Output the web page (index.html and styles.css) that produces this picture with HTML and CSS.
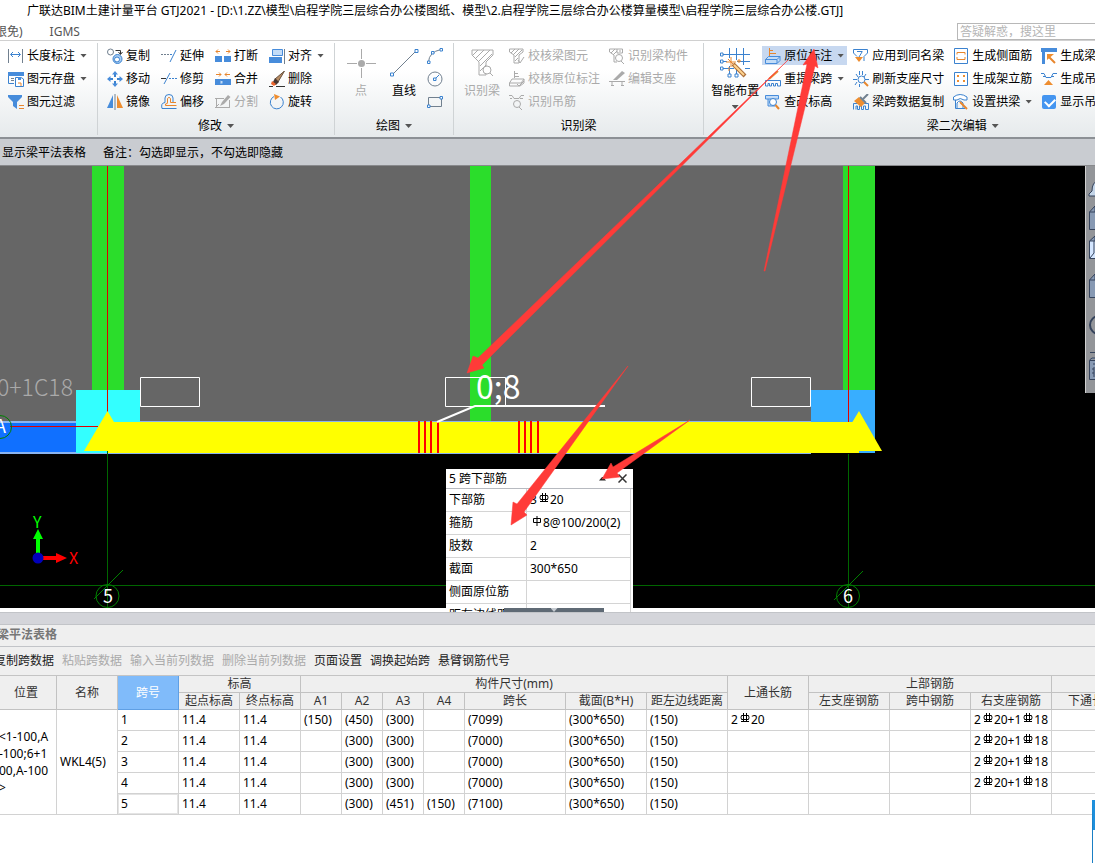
FILE: index.html
```html
<!DOCTYPE html>
<html lang="zh-CN">
<head>
<meta charset="utf-8">
<title>广联达BIM土建计量平台 GTJ2021</title>
<link rel="stylesheet" href="styles.css">
</head>
<body>
<svg class="defs" aria-hidden="true">
  <symbol id="rebar3" viewBox="0 0 10 10"><path d="M1.500 2.500H8.500Q9.500 4.500 8.500 6.500H1.500Q.5 4.500 1.500 2.500ZM3.500 0V9M6.500 0V9M1 8.500H9" fill="none" stroke="#000"/></symbol>
  <symbol id="rebar1" viewBox="0 0 10 10"><path d="M1.500 2.500H8.500V6.500H1.500ZM5 0V10" fill="none" stroke="#000"/></symbol>
  <symbol id="funnel" viewBox="0 0 24 28"><path d="M1 1H22V6L15 13V26H8V13L1 6Z M2 6L7 1M5 9L13 1M8 12L19 1M9 17L21 5M9 22L15 16" /></symbol>
</svg>

<header class="titlebar">广联达BIM土建计量平台 GTJ2021 - [D:\1.ZZ\模型\启程学院三层综合办公楼图纸、模型\2.启程学院三层综合办公楼算量模型\启程学院三层综合办公楼.GTJ]</header>

<nav class="tabs">
  <button class="tab">限免)</button>
  <button class="tab">IGMS</button>
  <input class="search" type="text" aria-label="搜索" placeholder="答疑解惑，搜这里">
</nav>

<section class="ribbon">
  <div class="group">
    <div class="group-body first">
      <div class="tools c1">
        <button class="tool"><svg class="ic" viewBox="0 0 16 16"><path class="g" d="M.5 1V15M14.500 1V15"/><path class="b" d="M3 6.500H12M5 4L2.500 6.500L5 9M10 4L12.500 6.500L10 9"/></svg><span>长度标注</span><i class="caret"></i></button>
        <button class="tool"><svg class="ic" viewBox="0 0 16 16"><path class="b" d="M.5 1V12.500H6M15.500 5V1"/><path class="bf" d="M0 1H16V5H0Z"/><path class="g" d="M3 7.500H6M3 9.500H6"/><path class="b w" d="M7.500 6.500H13L15.500 8V15.500H7.500Z"/><path class="bf" d="M10 6H13V9H10Z"/><path class="o" d="M10 12H13V15"/></svg><span>图元存盘</span><i class="caret"></i></button>
        <button class="tool"><svg class="ic" viewBox="0 0 16 16"><path class="bf" d="M0 1H14V3L9 8V15L5 12V8L0 3Z"/><path class="o" d="M11 11.500H16M11 14.500H16"/></svg><span>图元过滤</span></button>
      </div>
    </div>
  </div>

  <div class="group">
    <div class="group-body second">
      <div class="tools c4">
        <button class="tool"><svg class="ic" viewBox="0 0 16 16"><circle class="g" cx="3.500" cy="4" r="3"/><path class="k" d="M8.500 2.500H13.500V6M11.500 4L13.500 6.500L15.500 4"/><circle class="b lb" cx="10.500" cy="11" r="4.500"/><circle class="b w" cx="10" cy="11.500" r="2.500"/></svg><span>复制</span></button>
        <button class="tool"><svg class="ic" viewBox="0 0 16 16"><path class="g dash" d="M0 6.500H9"/><path class="b" d="M9 6.500H11M9 14L15 2"/></svg><span>延伸</span></button>
        <button class="tool"><svg class="ic" viewBox="0 0 16 16"><path class="bf" d="M0 8H7V14H0ZM9 8H16V14H9Z"/><path class="o" d="M1 3.500H5M11 3.500H15M3 1.500L1 3.500L3 5.500M13 1.500L15 3.500L13 5.500"/></svg><span>打断</span></button>
        <button class="tool"><svg class="ic" viewBox="0 0 16 16"><path class="bl" d="M3.500 1.500H13.500V7.500H3.500Z"/><path class="bf" d="M0 9H13V15H0Z"/><path class="g" d="M15.500 1V16"/></svg><span>对齐</span><i class="caret"></i></button>

        <button class="tool"><svg class="ic" viewBox="0 0 16 16"><path class="b2" d="M8 6V2M8 10V14M6 8H2M10 8H14"/><path class="bf" d="M8 0L11 3.500H5ZM8 16L5 12.500H11ZM0 8L3.500 5V11ZM16 8L12.500 11V5Z"/></svg><span>移动</span></button>
        <button class="tool"><svg class="ic" viewBox="0 0 16 16"><path class="k" d="M0 7.500H5"/><path class="b" d="M3 13L9 2"/><path class="b dash" d="M8 7.500H16"/></svg><span>修剪</span></button>
        <button class="tool"><svg class="ic" viewBox="0 0 16 16"><path class="bf" d="M0 8H16V14H0Z"/><path class="bl" d="M5.500 9.500H8V13H5.500"/><path class="o" d="M1 3.500H6M10 3.500H15M4 1.500L6 3.500L4 5.500M12 1.500L10 3.500L12 5.500"/></svg><span>合并</span></button>
        <button class="tool"><svg class="ic" viewBox="0 0 16 16"><path class="k" d="M0 15.500H4M7 15.500H16"/><path d="M15.500 0L6 8L9 11Z" fill="#b78b62" stroke="#67513e"/><path d="M6 7L10 11L7 14L3 13Z" fill="#493832"/><path d="M3 10L7 13L5 15L2 13Z" fill="#ed642c"/></svg><span>删除</span></button>

        <button class="tool"><svg class="ic" viewBox="0 0 16 16"><path class="bf" d="M6 1V14H0Z"/><path class="g" d="M8 0V16"/><path class="of" d="M10 1V14H16Z"/></svg><span>镜像</span></button>
        <button class="tool"><svg class="ic" viewBox="0 0 16 16"><path class="b" d="M15.500 14.500H1Q-.5 9 4 8.500V4Q4 .5 8 .5T12 4V8.500"/><path class="o" d="M15.500 11.500H4.500V10Q7 10 6.500 8V4.500Q8 2 9.500 4.500V8.500H15"/></svg><span>偏移</span></button>
        <button class="tool off"><svg class="ic" viewBox="0 0 16 16"><path class="s" d="M0 4.500H9M1.500 5V13M1 13.500H15M14.500 6V14M0 14L4 10"/><path d="M13 1L15.500 3L9 10L5 12L7 8Z" fill="#aaa"/></svg><span>分割</span></button>
        <button class="tool"><svg class="ic" viewBox="0 0 16 16"><path class="b" d="M11.500 3A6.500 6.500 0 1 1 5 2.500" stroke-width="1.500"/><path class="of" d="M5 0L11 2.500L6 6Z"/></svg><span>旋转</span></button>
      </div>
    </div>
    <div class="group-name">修改<i class="caret"></i></div>
  </div>

  <div class="group">
    <div class="group-body third">
      <button class="big off"><svg viewBox="0 0 30 30"><path class="s" d="M15.500 1V11M15.500 20V30M1 15.500H11M20 15.500H30"/><circle cx="15.500" cy="15.500" r="3.500" fill="#aaa"/></svg><span>点</span></button>
      <button class="big"><svg viewBox="0 0 30 30"><path class="g" d="M4 26L26 4"/><path class="b w" d="M1.500 25H4.500V28H1.500ZM26 1.500H29V4.500H26Z"/></svg><span>直线</span></button>
      <div class="tools c1 bare">
        <button class="tool" aria-label="弧"><svg class="ic" viewBox="0 0 16 16"><path class="g" d="M1.500 14Q2 4 14 1.500"/><path class="b w" d="M.5 13H3V15.500H.5ZM4.500 3.500H7V6H4.500ZM13 .5H15.500V3H13Z"/></svg></button>
        <button class="tool" aria-label="圆"><svg class="ic" viewBox="0 0 16 16"><circle class="g" cx="8" cy="8" r="7"/><path class="b" d="M6.500 7H9V9.500H6.500ZM9 7L12 4"/></svg></button>
        <button class="tool" aria-label="矩形"><svg class="ic" viewBox="0 0 16 16"><path class="g" d="M1.500 3.500H14.500V12.500H1.500Z"/><path class="b w" d="M.5 11H3V13.500H.5ZM13 2.500H15.500V5H13Z"/></svg></button>
      </div>
    </div>
    <div class="group-name">绘图<i class="caret"></i></div>
  </div>

  <div class="group">
    <div class="group-body fourth">
      <button class="big off"><svg viewBox="0 0 30 30"><use class="s" href="#funnel" x="4" y="1" width="24" height="28"/><circle class="s w" cx="20" cy="22" r="4"/><path class="s" d="M23 25L26 28"/></svg><span>识别梁</span></button>
      <div class="tools c1">
        <button class="tool off"><svg class="ic" viewBox="0 0 16 16"><path class="s" d="M.5 1H14V4L10 7V15H5V7L.5 4ZM2 5L6 1M4 7L10 1M6 9L13 2M6 13L9 10M9 12L11 15L15 9"/></svg><span>校核梁图元</span></button>
        <button class="tool off"><svg class="ic" viewBox="0 0 16 16"><path class="s" d="M5.500 0V7M5.500 2.500H9M5.500 5.500H10M3 8H15L12 12H.5ZM.5 12V15H11L15 12V8M8 13L10 15L15 10"/></svg><span>校核原位标注</span></button>
        <button class="tool off"><svg class="ic" viewBox="0 0 16 16"><path class="s" d="M0 1.500H3L5 4.500H10L12 1.500H15M1 4.500H3M11 4.500H14"/><circle class="s" cx="8" cy="10" r="3.500"/><path class="s" d="M10 13L13 16"/></svg><span>识别吊筋</span></button>
      </div>
      <div class="tools c1">
        <button class="tool off"><svg class="ic" viewBox="0 0 16 16"><path class="s" d="M.5 1H8V5H13.500V1H8M5 14V7L.5 4V1M2 5L6 1M4 7L8 3M5 14H8M10 3H12"/><circle class="s" cx="10" cy="10" r="3.500"/><path class="s" d="M12 13L15 16"/></svg><span>识别梁构件</span></button>
        <button class="tool off"><svg class="ic" viewBox="0 0 16 16"><path class="s" d="M0 10.500H16M3 11V15M13 11V15M2 14.500H5M12 14.500H15"/><path d="M13 0L16 2L8 9H4Z" fill="#aaa"/></svg><span>编辑支座</span></button>
      </div>
    </div>
    <div class="group-name">识别梁</div>
  </div>

  <div class="group last">
    <div class="group-body fifth">
      <button class="big"><svg viewBox="0 0 30 30"><path class="b" d="M9.500 0V10M9.500 18V26M16.500 0V12M23.500 0V17M3 6.500H30M3 13.500H7M17 13.500H30M3 20.500H14M25 20.500H30M16.500 22V27"/><path class="b w" d="M.5 5H3V8H.5ZM.5 12H3V15H.5ZM.5 19H3V22H.5ZM8 26H11V29H8ZM15 26H18V29H15Z"/><path d="M13 16L25 28" stroke="#ad713c" stroke-width="4"/><path d="M14 17L24 27" stroke="#ffd48e" stroke-width="2"/><path class="o" d="M11 9V19M6 14H16M8 11L14 17M19 11V15M17 13H21M9 19V23"/></svg><span>智能布置</span><i class="caret"></i></button>
      <div class="tools c4">
        <button class="tool active"><svg class="ic" viewBox="0 0 16 16"><path class="o" d="M4.500 0V8M4.500 2.500H8M4.500 5.500H11"/><path class="bl" d="M3.500 8.500H15L12 11.500H.5ZM.5 11.500V15.500H12V11.500M12 15.500L15 12.500V8.500"/></svg><span>原位标注</span><i class="caret"></i></button>
        <button class="tool"><svg class="ic" viewBox="0 0 16 16"><path class="b" d="M.5 1.500H14.500V5L11 8.500V13M.5 1.500V5L4 8.500M4 3.500H9.500M9 4L6 9"/><path class="of" d="M2 9H10L6 14Z"/></svg><span>应用到同名梁</span></button>
        <button class="tool"><svg class="ic" viewBox="0 0 16 16"><path class="b w" d="M1.500 .5H14.500V15.500H1.500Z"/><path class="o" d="M4 6.500V4.500H12V6.500M4 9V11.500H12V9"/></svg><span>生成侧面筋</span></button>
        <button class="tool"><svg class="ic" viewBox="0 0 16 16"><path class="bf" d="M0 0H16V4H0ZM1 3H4V16H1Z"/><path class="o2" d="M14 15L8 9"/><path class="of" d="M6 6H13L6 12Z"/></svg><span>生成梁加腋</span></button>

        <button class="tool"><svg class="ic" viewBox="0 0 16 16"><path class="b" d="M.5 15V9.500H15.500V15H12.500V12.500H10.500V15H8.500V12.500H6.500V15H4.500V12.500H3V15Z"/><path class="o2" d="M4 8L13 0"/></svg><span>重提梁跨</span><i class="caret"></i></button>
        <button class="tool"><svg class="ic" viewBox="0 0 16 16"><path class="b" d="M6.500 0V4M9.500 0V4M3 3L5 6M13 3L11 6M0 8.500H4M12 8.500H16M4 11L2 14M6.500 13V16"/><circle class="b" cx="8.500" cy="8.500" r="3.500"/><path class="o2" d="M11 11L15 15"/></svg><span>刷新支座尺寸</span></button>
        <button class="tool"><svg class="ic" viewBox="0 0 16 16"><path class="b w" d="M1.500 1.500H14.500V14.500H1.500Z"/><path class="of" d="M4 4H6V6H4ZM10 4H12V6H10ZM4 9H6V11H4ZM10 9H12V11H10Z"/></svg><span>生成架立筋</span></button>
        <button class="tool"><svg class="ic" viewBox="0 0 16 16"><path class="b" d="M0 2.500H3L5 6.500H10L12 2.500H16M2 5.500H4M11 5.500H13"/><path class="of" d="M7.500 9L12 14H3Z"/></svg><span>生成吊筋</span></button>

        <button class="tool"><svg class="ic" viewBox="0 0 16 16"><path class="bl" d="M.5 1.500H13.500V5H.5ZM3 5V12H10V5"/><circle class="b w" cx="8" cy="8" r="3.500"/><path class="o2" d="M10.500 11L14 15"/></svg><span>查改标高</span></button>
        <button class="tool"><svg class="ic" viewBox="0 0 16 16"><path class="b" d="M.5 15.500V9.500H15.500V15.500H12.500V12H10.500V15.500H8.500V12H6.500V15.500H4.500V12H3V15.500"/><path class="g2" d="M10 5L15 0"/><path class="of" d="M6 3L12 9L8 13L1 7Z"/><path class="g2" d="M7 3L13 9"/></svg><span>梁跨数据复制</span></button>
        <button class="tool"><svg class="ic" viewBox="0 0 16 16"><path class="b w" d="M.5 6V3Q7-2 14 3V6H11Q7 3 4 6ZM2.500 6V14.500H12M4 14V9Q7 5 10 9V14"/><path class="o2" d="M7 8L14 15"/></svg><span>设置拱梁</span><i class="caret"></i></button>
        <label class="tool"><input type="checkbox" checked><span>显示吊筋</span></label>
      </div>
    </div>
    <div class="group-name">梁二次编辑<i class="caret"></i></div>
  </div>
</section>

<div class="options"><span>显示梁平法表格</span><span>备注：勾选即显示，不勾选即隐藏</span></div>

<main class="viewport">
  <svg class="scene" role="img" aria-label="梁平面模型">
    <g transform="translate(0,-166)">
      <path fill="#666" d="M0 166H848V421H0Z"/>
      <path fill="#2bdd2b" d="M92 166H124V390H92ZM470 166H491V421H470ZM843 166H875V390H843Z"/>
      <path fill="#8ab4f0" d="M0 421H811V454H0Z"/>
      <path fill="#1070ff" d="M0 423H76V452H0Z"/>
      <path fill="#3ff" d="M76 390H140V453H76Z"/>
      <path fill="#38aeff" d="M811 390H875V453H811Z"/>
      <path stroke="#e00000" d="M107.500 166V415M848.500 166V423M10 426.500H98"/>
      <path fill="#ff0" d="M107 422H859V453H107Z"/>
      <path fill="#ff0" d="M107.500 411L84 451H131Z"/>
      <path fill="#ff0" d="M859 411L835 451H882Z"/>
      <path stroke="#060" d="M0 585.500H3000M107.500 451V608M848.500 454V608" />
      <g fill="none" stroke="#008000"><circle cx="107.500" cy="596" r="11.500"/><circle cx="848" cy="596" r="11.500"/><circle cx="0" cy="427" r="11.500"/><path d="M94 599L123 570M834 600L863 571"/></g>
      <path stroke="red" stroke-width="2" d="M419 421V453M425 421V453M431 421V453M438 421V453M519 421V453M525 421V453M531 421V453M538 421V453"/>
      <path fill="none" stroke="#fff" d="M140.500 377.500H199.500V406.500H140.500ZM445.500 377.500H505.500V406.500H445.500ZM751.500 377.500H810.500V406.500H751.500Z"/>
      <path fill="none" stroke="#fff" stroke-width="2" d="M437 422L475 406H605"/>
      <text class="cad dim" x="-3" y="396">0+1C18</text>
      <text class="cad load" x="476" y="399">0;8</text>
      <text class="cad mark" x="103" y="603">5</text>
      <text class="cad mark" x="843" y="603">6</text>
      <text class="cad mark" x="-5" y="433">A</text>
      <path fill="#0f0" d="M36 555V539H33L38 529L43 539H40V555Z"/>
      <path fill="red" d="M43 556H56V553L67 558L56 563V560H43Z"/>
      <circle cx="38" cy="558" r="5.500" fill="#00b"/>
      <text class="cad axis-y" x="33" y="528">Y</text>
      <text class="cad axis-x" x="69" y="564">X</text>
    </g>
  </svg>

  <section class="popup">
    <header class="popup-head"><span>5 跨下部筋</span><button class="collapse" aria-label="收起"><i class="caret up"></i></button><button class="close" aria-label="关闭"><svg viewBox="0 0 9 9"><path d="M.5 .5L8.500 8.500M8.500 .5L.5 8.500" stroke="#333" stroke-width="1.500"/></svg></button></header>
    <table class="props">
      <tr><th>下部筋</th><td>3<svg class="rebar"><use href="#rebar3"/></svg>20</td></tr>
      <tr><th>箍筋</th><td><svg class="rebar"><use href="#rebar1"/></svg>8@100/200(2)</td></tr>
      <tr><th>肢数</th><td>2</td></tr>
      <tr><th>截面</th><td>300*650</td></tr>
      <tr><th>侧面原位筋</th><td></td></tr>
      <tr><th>距左边线距离</th><td></td></tr>
    </table>
  </section>
  <button class="handle" aria-label="折叠表格"><i class="caret"></i></button>

  <aside class="viewbar">
    <svg viewBox="0 0 10 226"><g fill="#8799b3" stroke="#35435c"><path d="M12 15Q6 16 6 25L3 28V30H12" fill="#c4d5e8"/><path d="M3.500 46L9 40V46M3.500 46H12V63.500H3.500Z"/><path d="M3.500 75L9 70V75"/><path d="M3.500 75H12V92.500H3.500Z" fill="#d4e6ff"/><path d="M4 92L8 87V75" fill="none"/><path d="M3.500 114L9 108V114M3.500 114H12V131.500H3.500Z"/><circle cx="13" cy="159" r="9" fill="none" stroke-width="2"/><path d="M4 186.500H10M3.500 194L6 192H12M3.500 194.500H12V213.500H3.500ZM7 198H12M7 202H12V204H7ZM7 206H12V208H7ZM7 210H12"/></g></svg>
  </aside>
</main>

<section class="panel">
  <h2>梁平法表格</h2>
  <div class="panel-tools">
    <button>复制跨数据</button><button class="off">粘贴跨数据</button><button class="off">输入当前列数据</button><button class="off">删除当前列数据</button><button>页面设置</button><button>调换起始跨</button><button>悬臂钢筋代号</button>
  </div>
  <div class="sheet-wrap">
  <table class="sheet">
    <colgroup><col class="m" span="5"><col class="s1" span="4"><col class="l"><col class="n" span="8"></colgroup>
    <thead>
      <tr><th rowspan="2">位置</th><th rowspan="2">名称</th><th rowspan="2" class="picked">跨号</th><th colspan="2">标高</th><th colspan="7">构件尺寸(mm)</th><th rowspan="2">上通长筋</th><th colspan="3">上部钢筋</th><th colspan="2"></th></tr>
      <tr><th>起点标高</th><th>终点标高</th><th>A1</th><th>A2</th><th>A3</th><th>A4</th><th>跨长</th><th>截面(B*H)</th><th>距左边线距离</th><th>左支座钢筋</th><th>跨中钢筋</th><th>右支座钢筋</th><th>下通长筋</th><th></th></tr>
    </thead>
    <tbody>
      <tr><td rowspan="5" class="place">&lt;1-100,A<br>-100;6+1<br>00,A-100<br>&gt;</td><td rowspan="5">WKL4(5)</td><td>1</td><td>11.4</td><td>11.4</td><td>(150)</td><td>(450)</td><td>(300)</td><td></td><td>(7099)</td><td>(300*650)</td><td>(150)</td><td>2<svg class="rebar"><use href="#rebar3"/></svg>20</td><td></td><td></td><td>2<svg class="rebar"><use href="#rebar3"/></svg>20+1<svg class="rebar"><use href="#rebar3"/></svg>18</td><td></td><td></td></tr>
      <tr><td>2</td><td>11.4</td><td>11.4</td><td></td><td>(300)</td><td>(300)</td><td></td><td>(7000)</td><td>(300*650)</td><td>(150)</td><td></td><td></td><td></td><td>2<svg class="rebar"><use href="#rebar3"/></svg>20+1<svg class="rebar"><use href="#rebar3"/></svg>18</td><td></td><td></td></tr>
      <tr><td>3</td><td>11.4</td><td>11.4</td><td></td><td>(300)</td><td>(300)</td><td></td><td>(7000)</td><td>(300*650)</td><td>(150)</td><td></td><td></td><td></td><td>2<svg class="rebar"><use href="#rebar3"/></svg>20+1<svg class="rebar"><use href="#rebar3"/></svg>18</td><td></td><td></td></tr>
      <tr><td>4</td><td>11.4</td><td>11.4</td><td></td><td>(300)</td><td>(300)</td><td></td><td>(7000)</td><td>(300*650)</td><td>(150)</td><td></td><td></td><td></td><td>2<svg class="rebar"><use href="#rebar3"/></svg>20+1<svg class="rebar"><use href="#rebar3"/></svg>18</td><td></td><td></td></tr>
      <tr><td class="current">5</td><td>11.4</td><td>11.4</td><td></td><td>(300)</td><td>(451)</td><td>(150)</td><td>(7100)</td><td>(300*650)</td><td>(150)</td><td></td><td></td><td></td><td></td><td></td><td></td></tr>
    </tbody>
  </table>
  </div>
  <div class="dock"></div>
</section>

<svg class="arrows" aria-hidden="true"><g fill="#ff3b38" stroke="#ff3b38" stroke-width=".5" stroke-linejoin="round">
  <path d="M788 60L478 358L473 356L467 373L484 368L482 365Z"/>
  <path d="M764 271H765L815 66L818 68L814 49L803 65L807 64Z"/>
  <path d="M628 366L517 504L513 502L511 525L527 515L524 512Z"/>
  <path d="M690 420L613 467L611 463L602 479L620 477L617 473Z"/>
</g></svg>
</body>
</html>
```
FILE: styles.css
```css
* { box-sizing: border-box; }
body {
  margin: 0;
  position: relative;
  min-height: 100vh;
  display: flex;
  flex-direction: column;
  overflow: hidden;
  background: #fff;
  color: #000;
  font: 12px/16px "Noto Sans", "Noto Sans CJK SC", sans-serif;
}
button, input { font: inherit; color: inherit; }
button { margin: 0; padding: 0; border: 0; background: none; white-space: nowrap; }
.defs { position: absolute; width: 0; height: 0; }

.titlebar { height: 22px; padding: 3px 27px; white-space: nowrap; }
.tabs {
  display: flex;
  align-items: center;
  gap: 27px;
  height: 19px;
  margin-left: -5px;
  border-bottom: 1px solid #d0d0d0;
  color: #555;
}
.tab { flex: none; padding-top: 2px; }
.search {
  width: 138px;
  height: 17px;
  margin-left: auto;
  padding: 0 2px;
  border: 1px solid #b8b8b8;
  border-right: 0;
  background: #fff;
}
.search::placeholder { color: #b5b5b5; opacity: 1; }

.ribbon {
  display: flex;
  height: 98px;
  padding: 2px 0;
  overflow: hidden;
  border-bottom: 2px solid #8c9095;
  background: linear-gradient(#fff 30%, #e6eaec);
}
.group { flex: none; display: flex; flex-direction: column; border-right: 1px solid #cfd3d5; }
.group.last { border-right: 0; }
.group-body { display: flex; flex: none; gap: 1px; height: 72px; padding-top: 3px; }
.first { padding-left: 5px; padding-right: 7px; }
.second { padding-left: 6px; padding-right: 7px; }
.third { padding-left: 5px; padding-right: 9px; }
.fourth { gap: 3px; padding-left: 7px; padding-right: 12px; }
.fifth { gap: 0; padding-left: 4px; padding-right: 98px; }
.fifth .tools { column-gap: 3px; }
.group-name { display: flex; flex: none; justify-content: center; align-items: center; gap: 5px; padding-top: 3px; }

.tools { display: grid; gap: 4px 5px; align-content: start; grid-auto-rows: 19px; }
.c1 { grid-template-columns: auto; }
.c4 { grid-template-columns: repeat(4, auto); }
.tool { display: flex; align-items: center; gap: 3px; height: 19px; padding: 0 3px; white-space: nowrap; }
.bare .tool { padding: 0 1px; }
.tool .caret { margin-left: 2px; }
.active { background: #c7d8f0; }
.off { color: #aaa; }
.ic { flex: none; width: 16px; height: 16px; }
.big { display: flex; flex-direction: column; align-items: center; min-width: 42px; padding: 0 3px; height: 66px; }
.big > svg { width: 30px; height: 30px; margin-top: 2px; margin-bottom: 5px; }
.big .caret { margin-top: 6px; }
.caret { display: block; flex: none; width: 7px; height: 4px; background: #555; clip-path: polygon(0 0, 100% 0, 50% 100%); }
.caret.up { background: #222; clip-path: polygon(50% 0, 100% 100%, 0 100%); }

.b, .b2, .g, .g2, .k, .o, .o2, .s { fill: none; stroke-width: 1; }
.b, .b2 { stroke: #3b82cf; }
.b2, .o2, .g2 { stroke-width: 2; }
.g, .g2 { stroke: #71808f; }
.k { stroke: #333; }
.o, .o2 { stroke: #e8862d; }
.s { stroke: #aaa; }
.w { fill: #fff; }
.lb { fill: #a9cdf3; }
.bf { fill: #478cdb; }
.bl { fill: #c3dcf7; stroke: #478cdb; }
.of { fill: #ee8d2f; }
.dash { stroke-dasharray: 2 1; }

.tool input {
  appearance: none;
  width: 14px;
  height: 14px;
  margin: 0 1px;
  border-radius: 2px;
  background: #4495f0;
}
.tool input:checked::before {
  content: "";
  display: block;
  width: 8px;
  height: 5px;
  margin: 3px;
  border: solid #fff;
  border-width: 0 0 2px 2px;
  transform: rotate(-45deg);
}

.options {
  display: flex;
  align-items: center;
  gap: 17px;
  height: 27px;
  padding-left: 2px;
  padding-top: 2px;
  border-bottom: 1px solid #88898c;
  background: #c9ccd1;
}

.viewport {
  position: relative;
  height: 446px;
  padding-bottom: 4px;
  overflow: hidden;
}
.scene { display: block; width: 100%; height: 100%; background: #000; }
.cad { font-family: "Noto Sans CJK SC", sans-serif; font-weight: 400; fill: #fff; }
.dim { font-size: 23px; font-weight: 300; fill: #aaa; }
.load { font-size: 32px; }
.mark { font-size: 18px; }
.axis-x, .axis-y { font-size: 16px; }
.axis-x { fill: red; }
.axis-y { fill: #0f0; }

.popup { position: absolute; left: 446px; top: 303px; width: 187px; background: #fff; }
.popup-head { display: flex; align-items: center; height: 20px; padding: 0 6px 0 3px; border-bottom: 1px solid #b7bac0; }
.popup-head span { margin-right: auto; }
.collapse { margin-right: 12px; }
.close, .close svg { display: block; width: 9px; height: 9px; }
.props { table-layout: fixed; width: 185px; border-collapse: separate; border-spacing: 0; }
.props th, .props td {
  height: 23px;
  padding: 0 3px;
  border-right: 1px solid #d4d4d4;
  border-bottom: 1px solid #d4d4d4;
  font-weight: 400;
  text-align: left;
  white-space: nowrap;
}
.props th { width: 81px; }
.rebar { display: inline-block; width: 10px; height: 10px; margin: 0 1px 1px 2px; vertical-align: baseline; }
.handle {
  position: absolute;
  left: 504px;
  bottom: 0;
  display: flex;
  justify-content: center;
  width: 100px;
  height: 4px;
  background: #5f6a75;
}
.handle .caret { background: #c5cad0; }
.viewbar { position: absolute; right: 0; top: 0; width: 10px; height: 227px; border-left: 1px solid #d0d0d0; background: #939599; }
.viewbar svg { display: block; width: 10px; height: 226px; }

.panel { position: relative; flex: 1; border-top: 1px solid #c2c4c8; }
.panel::before { content: ""; display: block; height: 11px; border-bottom: 1px solid #c2c4c8; background: #d4d5da; }
.panel h2 {
  height: 22px;
  margin: 0;
  padding-top: 2px;
  border-bottom: 1px solid #c2c4c8;
  background: #efefef;
  color: #777;
  font-size: 12px;
  line-height: 16px;
  text-indent: -3px;
}
.panel-tools {
  display: flex;
  align-items: center;
  gap: 8px;
  height: 29px;
  border-bottom: 1px solid #c4c4c4;
  background: #efefef;
  color: #222;
}
.panel-tools button:first-child { margin-left: -6px; }
.panel-tools .off { color: #aaa; }
.sheet-wrap { overflow: hidden; }
.sheet { table-layout: fixed; width: 1214px; margin-left: -4px; border-collapse: separate; border-spacing: 0; }
.m { width: 61px; }
.s1 { width: 41px; }
.l { width: 101px; }
.n { width: 81px; }
.sheet th, .sheet td { padding: 0 3px; border-right: 1px solid #d2d2d2; border-bottom: 1px solid #d2d2d2; white-space: nowrap; }
.sheet th { height: 17px; padding: 0; border-color: #c2c2c2; background: #efefef; color: #333; font-weight: 400; }
.sheet td { height: 21px; text-align: left; }
.sheet .place { line-height: 17px; }
.sheet .picked { background: #80bbfa; border-color: #5f9fe4; color: #fff; }
.sheet .current { box-shadow: inset 0 0 0 1px #e4e4e4; }
.dock { position: absolute; right: 0; bottom: 0; width: 3px; height: 63px; border-left: 1px solid #1a7fc4; border-top: 30px solid #1e90dd; }

.arrows { position: absolute; inset: 0; width: 100%; height: 100%; pointer-events: none; }
```
